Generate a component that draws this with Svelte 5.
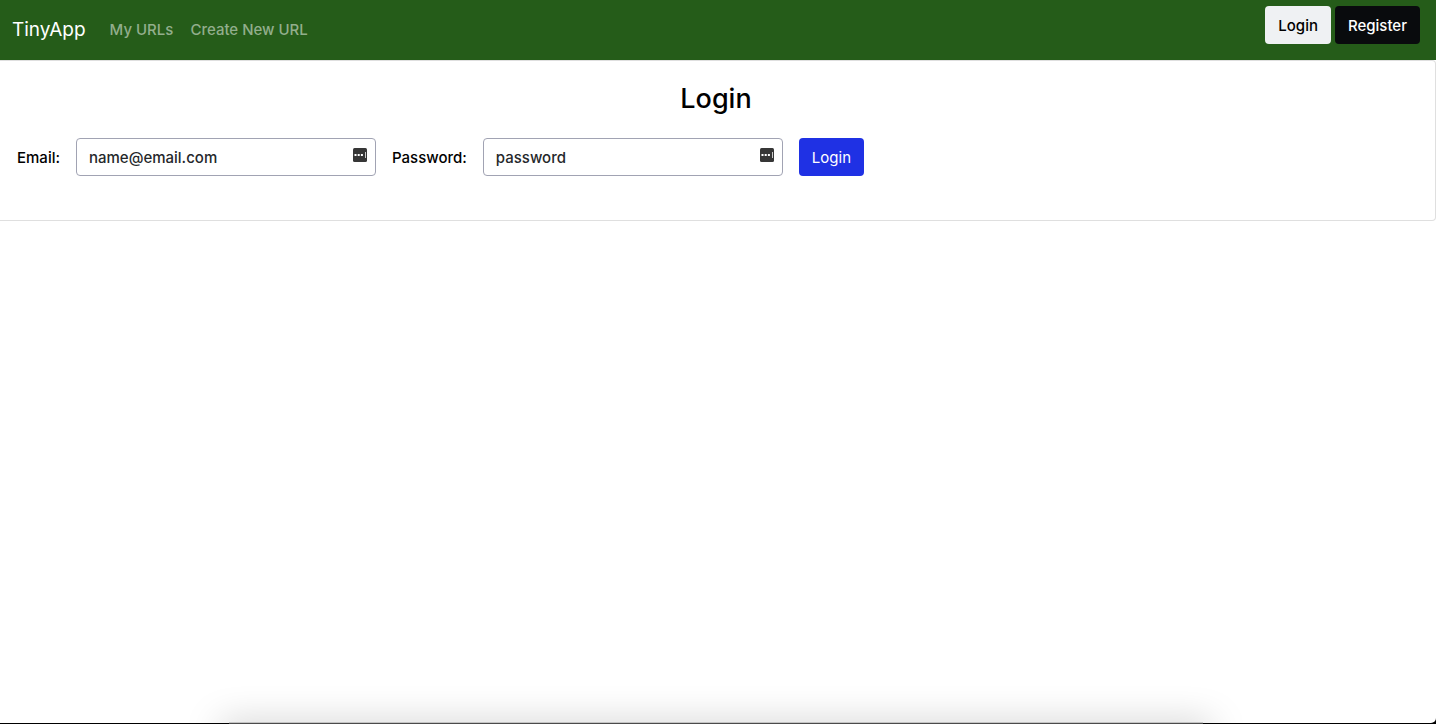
<script>
  const links = ['My URLs', 'Create New URL'];
  const fields = [
    { id: 'email', label: 'Email:', type: 'email', hint: 'name@email.com' },
    { id: 'password', label: 'Password:', type: 'password', hint: 'password' }
  ];
</script>

<div class="screen">
  <div class="page">
    <header>
      <a class="brand" href="#home">TinyApp</a>
      <nav>
        {#each links as link}
          <a href="#urls">{link}</a>
        {/each}
      </nav>
      <div class="actions">
        <button class="btn light" type="button">Login</button>
        <button class="btn dark" type="button">Register</button>
      </div>
    </header>

    <main>
      <h1>Login</h1>
      <form>
        {#each fields as field}
          <label for={field.id}>{field.label}</label>
          <div class="field">
            <input id={field.id} type={field.type} placeholder={field.hint} />
            <svg class="key" viewBox="0 0 14 14" width="14" height="14" aria-hidden="true">
              <rect width="14" height="14" rx="1.5" fill="#363636" />
              <path d="M1.5 6h2v2h-2zM4.7 6h2v2h-2zM7.9 6h2v2h-2z" fill="#fff" />
              <path d="M12 4h1v6h-1z" fill="#ccc" />
            </svg>
          </div>
        {/each}
        <button class="btn primary" type="button">Login</button>
      </form>
    </main>
  </div>
  <div class="dock"></div>
</div>

<style>
  :global(body) {
    margin: 0;
    background: #000;
  }
  .screen {
    position: relative;
    display: flex;
    flex-direction: column;
    min-height: 100vh;
    overflow: hidden;
    background: #000;
    font-family: Inter, 'Liberation Sans', sans-serif;
    font-size: 15px;
    font-weight: 500;
    line-height: 24px;
    color: #000;
  }
  .page {
    flex: 1;
    margin-bottom: 1px;
    border-radius: 0 0 5px 0;
    background: #fff;
  }
  header {
    display: flex;
    align-items: flex-start;
    height: 60px;
    box-sizing: border-box;
    padding: 6px 16px 0 12px;
    background: #255c19;
  }
  a {
    text-decoration: none;
  }
  .brand {
    padding: 8px 0;
    font-size: 19px;
    line-height: 32px;
    font-weight: 400;
    color: #fff;
  }
  nav {
    display: flex;
    gap: 17px;
    margin-left: 24px;
  }
  nav a {
    padding: 12px 0;
    color: #92ae8c;
  }
  .actions {
    display: flex;
    gap: 4px;
    margin-left: auto;
  }
  .btn {
    padding: 7px 12px 5px;
    border: 1px solid transparent;
    border-radius: 4px;
    font: inherit;
    cursor: pointer;
  }
  .light {
    background: #eff1f3;
    color: #000;
  }
  .dark {
    background: #090b0d;
    color: #fff;
  }
  .primary {
    background: #1f31e4;
    color: #fff;
    font-weight: 400;
  }
  main {
    padding: 21px 20px 44px 17px;
    border: 1px solid #dfdfdf;
    border-left: 0;
    border-radius: 0 4px 4px 0;
  }
  h1 {
    margin: 0 0 22px;
    font-size: 27px;
    line-height: 34px;
    font-weight: 500;
    text-align: center;
  }
  form {
    display: flex;
    align-items: center;
    gap: 16px;
  }
  label {
    padding-top: 2px;
  }
  .field {
    position: relative;
    width: 300px;
  }
  input {
    display: block;
    width: 100%;
    box-sizing: border-box;
    height: 38px;
    padding: 6px 36px 6px 12px;
    border: 1px solid #a1a3b3;
    border-radius: 4px;
    background: #fff;
    font: inherit;
  }
  input::placeholder {
    color: #25282b;
    opacity: 1;
  }
  .key {
    position: absolute;
    top: 10px;
    right: 9px;
  }
  .dock {
    position: absolute;
    right: 233px;
    bottom: 0;
    left: 229px;
    height: 2px;
    background: linear-gradient(#c4c4c4 50%, #4b4b4b 50%);
    box-shadow: 0 10px 36px 8px rgba(0, 0, 0, 0.25);
  }
</style>
